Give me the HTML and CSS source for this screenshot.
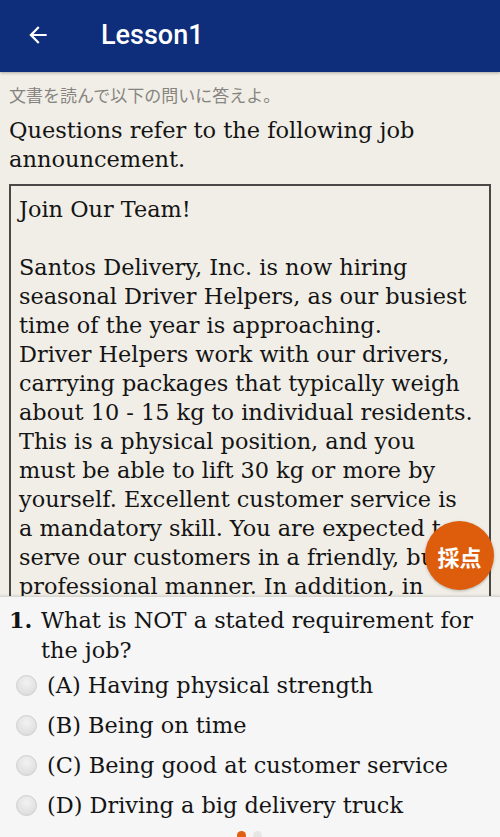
FILE: index.html
```html
<!DOCTYPE html>
<html lang="ja">

<head>
    <meta charset="UTF-8">
    <meta name="viewport" content="width=device-width, initial-scale=1.0">
    <title>Lesson1</title>
    <link rel="stylesheet" href="styles.css">
</head>

<body>
    <div class="app">
        <header class="bar">
            <svg class="back" viewBox="0 0 24 24" width="26" height="26">
                <path d="M20 11H7.83l5.59-5.59L12 4l-8 8 8 8 1.41-1.41L7.83 13H20v-2z" fill="#fff" />
            </svg>
            <h1 class="title">Lesson1</h1>
        </header>

        <main class="reading">
            <p class="hint">文書を読んで以下の問いに答えよ。</p>
            <p class="lead">Questions refer to the following job<br>announcement.</p>
            <div class="passage">
                <span>Join Our Team!</span><br>
                <br>
                <span>Santos Delivery, Inc. is now hiring</span><br>
                <span>seasonal Driver Helpers, as our busiest</span><br>
                <span>time of the year is approaching.</span><br>
                <span>Driver Helpers work with our drivers,</span><br>
                <span>carrying packages that typically weigh</span><br>
                <span>about 10 - 15 kg to individual residents.</span><br>
                <span>This is a physical position, and you</span><br>
                <span>must be able to lift 30 kg or more by</span><br>
                <span>yourself. Excellent customer service is</span><br>
                <span>a mandatory skill. You are expected to</span><br>
                <span>serve our customers in a friendly, but</span><br>
                <span>professional manner. In addition, in</span>
            </div>
        </main>

        <section class="quiz">
            <div class="question">
                <span class="num">1.</span>
                <span class="qtext">What is NOT a stated requirement for<br>the job?</span>
            </div>
            <ul class="options">
                <li><span class="radio"></span>(A) Having physical strength</li>
                <li><span class="radio"></span>(B) Being on time</li>
                <li><span class="radio"></span>(C) Being good at customer service</li>
                <li><span class="radio"></span>(D) Driving a big delivery truck</li>
            </ul>
            <div class="dots"><span class="on"></span><span></span></div>
        </section>

        <button class="score">採点</button>
    </div>
</body>

</html>
```

FILE: styles.css
```css
body {
    margin: 0;
    padding: 0;
    background: #f1eee7;
}

.app {
    position: relative;
    width: 500px;
    height: 837px;
    display: flex;
    flex-direction: column;
    overflow: hidden;
}

.bar {
    height: 72px;
    flex-shrink: 0;
    background: #0e2e7b;
    display: flex;
    align-items: center;
    box-shadow: 0 1px 3px rgba(0, 0, 0, 0.3);
}

.back {
    margin-left: 25px;
    margin-top: -2px;
}

.title {
    margin: -2px 0 0 50px;
    color: #fff;
    font-family: Roboto, "Noto Sans", sans-serif;
    font-weight: 500;
    font-size: 27px;
}

.reading {
    flex: 1;
    overflow: hidden;
    padding: 0 9px;
}

.hint {
    margin: 12px 0 0;
    font-family: "Noto Sans CJK JP", sans-serif;
    font-size: 17px;
    line-height: 22px;
    color: #868480;
}

.lead {
    margin: 10px 0 0;
    font-family: "DejaVu Serif", serif;
    font-size: 22.5px;
    line-height: 29px;
    color: #141414;
}

.passage {
    margin-top: 10px;
    border: 2px solid #4a4846;
    padding: 9px 8px;
    font-family: "DejaVu Serif", serif;
    font-size: 22.4px;
    line-height: 29px;
    color: #141414;
    white-space: nowrap;
}

.quiz {
    height: 240px;
    flex-shrink: 0;
    background: #f6f6f6;
    border-top: 1px solid #d9d7d2;
    box-shadow: 0 -1px 2px rgba(0, 0, 0, 0.08);
    font-family: "DejaVu Serif", serif;
    font-size: 22.4px;
    color: #141414;
}

.question {
    display: flex;
    padding: 8px 0 0 9px;
    line-height: 30px;
}

.num {
    width: 32px;
    flex-shrink: 0;
    font-weight: bold;
}

.qtext {
    white-space: nowrap;
}

.options {
    list-style: none;
    margin: 0;
    padding: 0;
}

.options li {
    height: 40px;
    display: flex;
    align-items: center;
    white-space: nowrap;
}

.radio {
    width: 21px;
    height: 21px;
    margin: 0 10px 0 16px;
    border-radius: 50%;
    border: 1px solid #cfcfcf;
    background: radial-gradient(circle at 50% 35%, #f2f2f2, #d8d8d8);
    box-sizing: border-box;
}

.dots {
    display: flex;
    justify-content: center;
    gap: 7px;
    margin-top: 6px;
    padding-right: 2px;
}

.dots span {
    width: 9px;
    height: 9px;
    border-radius: 50%;
    background: #e6e6e6;
}

.dots span.on {
    background: #e0600f;
}

.score {
    position: absolute;
    left: 425px;
    top: 521px;
    width: 69px;
    height: 69px;
    border: none;
    border-radius: 50%;
    background: #de5d0c;
    color: #fff;
    font-family: "Noto Sans CJK JP", sans-serif;
    font-weight: bold;
    font-size: 22px;
    padding: 0;
    box-shadow: 0 1px 3px rgba(0, 0, 0, 0.25);
}
```
